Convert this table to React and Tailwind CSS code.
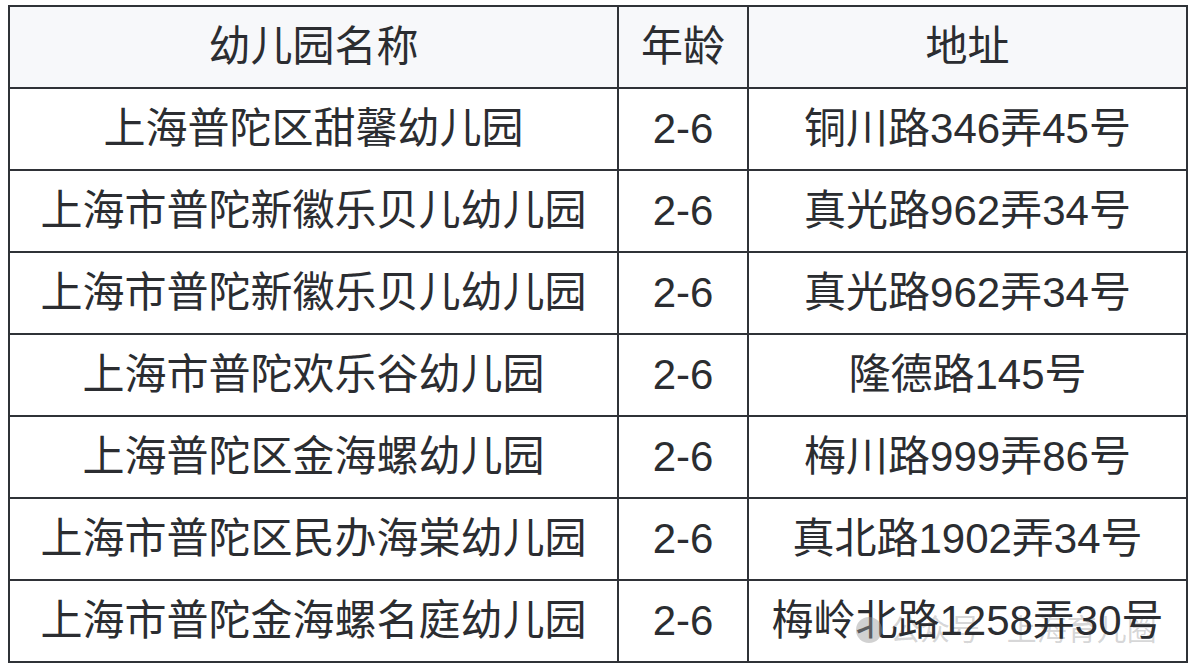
import React from 'react';

const rows = [
  ['上海普陀区甜馨幼儿园', '2-6', '铜川路346弄45号'],
  ['上海市普陀新徽乐贝儿幼儿园', '2-6', '真光路962弄34号'],
  ['上海市普陀新徽乐贝儿幼儿园', '2-6', '真光路962弄34号'],
  ['上海市普陀欢乐谷幼儿园', '2-6', '隆德路145号'],
  ['上海普陀区金海螺幼儿园', '2-6', '梅川路999弄86号'],
  ['上海市普陀区民办海棠幼儿园', '2-6', '真北路1902弄34号'],
  ['上海市普陀金海螺名庭幼儿园', '2-6', '梅岭北路1258弄30号'],
];

const cell = 'border-2 border-[#2f3237] text-center align-middle h-[82px] p-0 whitespace-nowrap';

export default function App() {
  return (
    <div
      className="w-[1193px] h-[670px] bg-white pl-[8px] pt-[5px] text-[#2b2d31] overflow-hidden"
      style={{ fontFamily: '"Liberation Sans", "Noto Sans CJK SC", sans-serif' }}
    >
      <div className="relative w-[1178px]">
        <table className="border-collapse table-fixed w-[1178px] text-[42px] leading-none">
          <colgroup>
            <col className="w-[609px]" />
            <col className="w-[130px]" />
            <col className="w-[439px]" />
          </colgroup>
          <thead>
            <tr className="bg-[#f7f8fa]">
              <th className={`${cell} font-normal`}>幼儿园名称</th>
              <th className={`${cell} font-normal`}>年龄</th>
              <th className={`${cell} font-normal`}>地址</th>
            </tr>
          </thead>
          <tbody>
            {rows.map((r, i) => (
              <tr key={i}>
                <td className={cell}>{r[0]}</td>
                <td className={cell}>{r[1]}</td>
                <td className={cell}>{r[2]}</td>
              </tr>
            ))}
          </tbody>
        </table>

        {/* faint watermark */}
        <div className="absolute left-[848px] top-[610px] flex items-center gap-2 whitespace-nowrap text-[30px] leading-none text-[#2b2d31]/20 pointer-events-none">
          <span className="w-[26px] h-[26px] rounded-full bg-[#9a9a9a]/45 inline-block" />
          <span>公众号 · 上海育儿圈</span>
        </div>
      </div>
    </div>
  );
}
